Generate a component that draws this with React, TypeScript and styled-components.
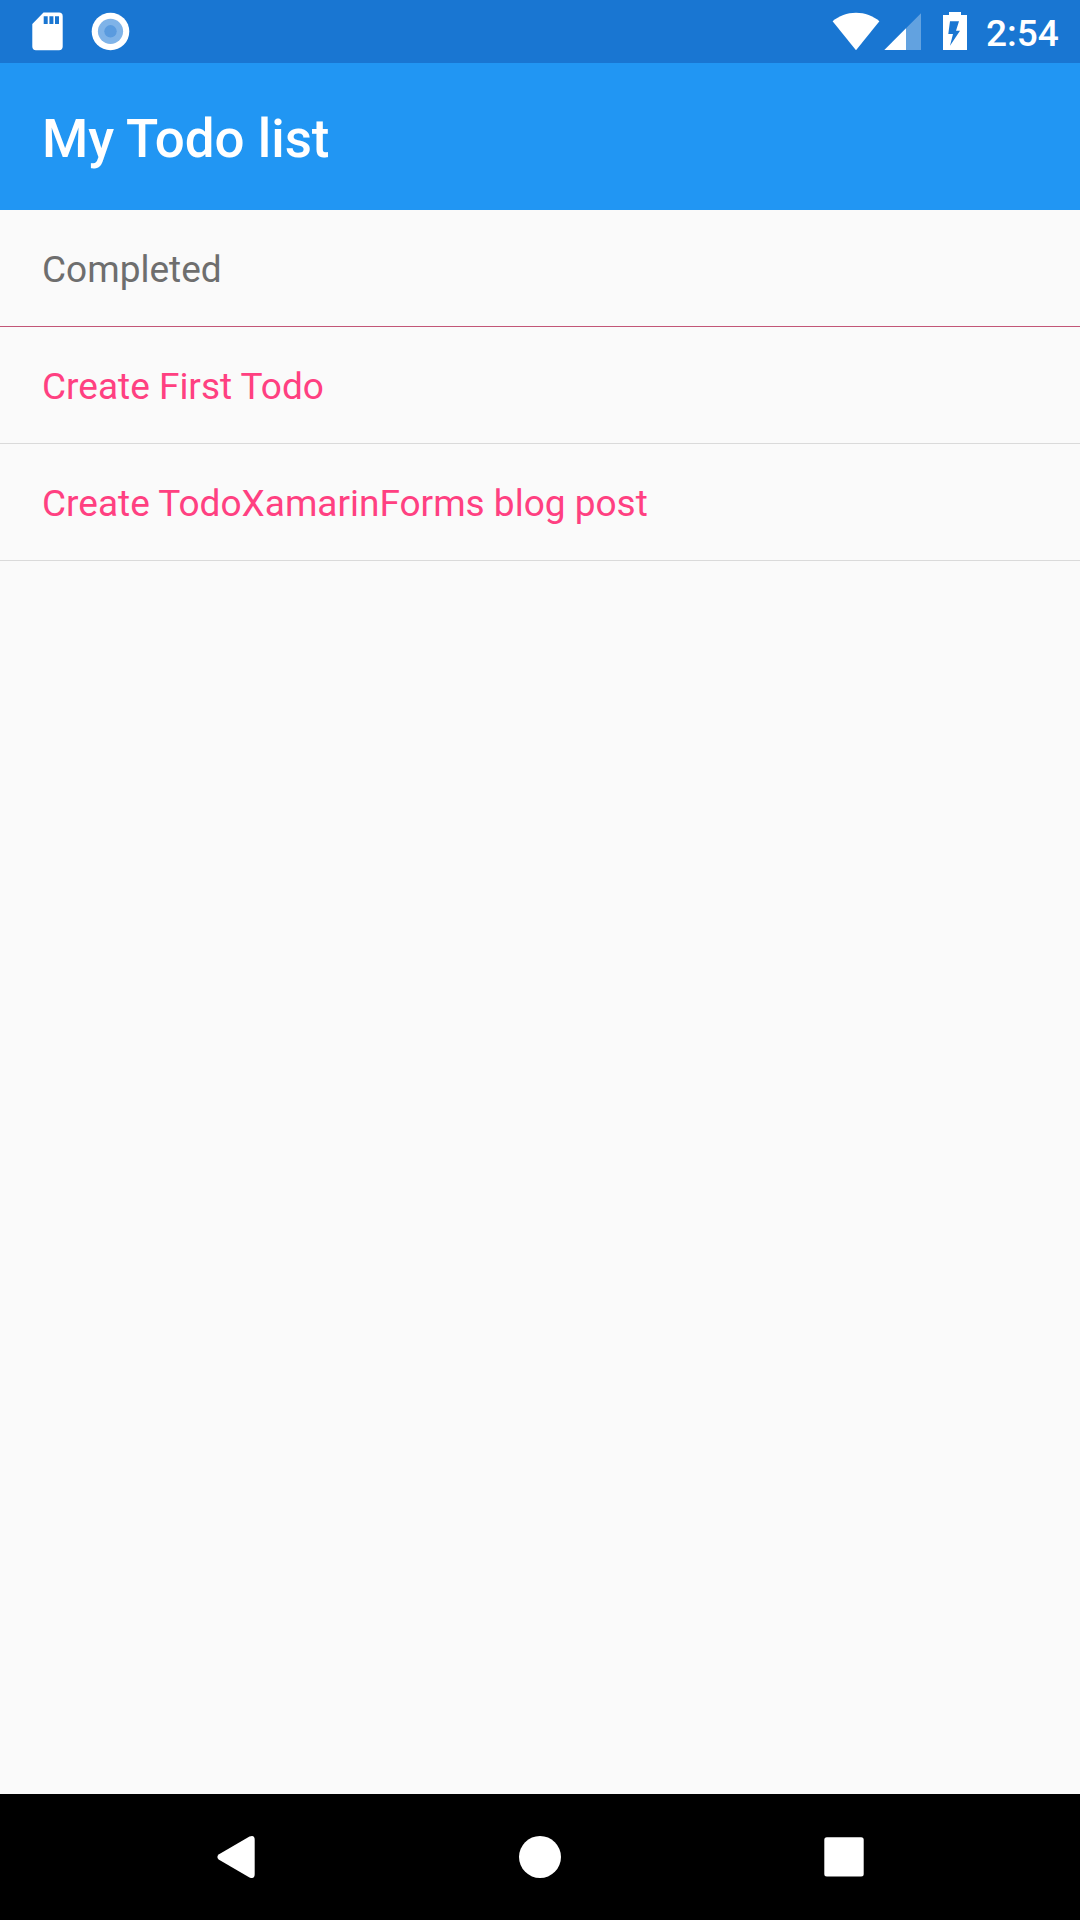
import React from "react";
import styled, { createGlobalStyle } from "styled-components";

const GlobalStyle = createGlobalStyle`
  *, *::before, *::after { box-sizing: border-box; }
  body { margin: 0; background: #fafafa; font-family: Roboto, "Noto Sans", sans-serif; }
`;

const Screen = styled.div`
  display: flex;
  flex-direction: column;
  width: 1080px;
  height: 1920px;
  background: #fafafa;
  overflow: hidden;
`;

const StatusBar = styled.header`
  display: flex;
  justify-content: space-between;
  height: 63px;
  padding: 0 21px 0 32px;
  background: #1976d2;
  color: #fff;
`;

const StatusGroup = styled.div`
  display: flex;
  align-items: flex-start;
`;

const Glyph = styled.svg<{ $gap?: number }>`
  display: block;
  flex: none;
  margin-right: ${(p) => p.$gap ?? 0}px;
`;

const Clock = styled.time`
  width: 73px;
  font-size: 37px;
  font-weight: 500;
  line-height: 43px;
  padding-top: 12px;
  white-space: nowrap;
`;

const AppBar = styled.div`
  display: flex;
  align-items: center;
  height: 147px;
  padding: 5px 42px 0;
  background: #2196f3;
`;

const Title = styled.h1`
  margin: 0;
  color: #fff;
  font-size: 52.9px;
  font-weight: 500;
  line-height: 62px;
`;

const List = styled.ul`
  flex: 1;
  margin: 0;
  padding: 0;
  list-style: none;
`;

const Row = styled.li<{ $header?: boolean }>`
  display: flex;
  align-items: center;
  height: 117px;
  padding: 2px 42px 0;
  border-bottom: 1px solid ${(p) => (p.$header ? "#c25577" : "#dadada")};
  color: ${(p) => (p.$header ? "#6e6e6e" : "#ff4081")};
  font-size: 37px;
  line-height: 43px;
`;

const NavBar = styled.nav`
  display: flex;
  align-items: center;
  justify-content: center;
  gap: 178px;
  height: 126px;
  background: #000;
`;

const NavButton = styled.button`
  display: flex;
  width: 126px;
  height: 126px;
  align-items: center;
  justify-content: center;
  padding: 0;
  border: 0;
  background: transparent;
`;

const todos = ["Create First Todo", "Create TodoXamarinForms blog post"];

export default function App() {
  return (
    <>
      <GlobalStyle />
      <Screen>
        <StatusBar>
          <StatusGroup>
            <Glyph width="31" height="63" viewBox="32 0 31 63" $gap={28}>
              <path
                fill="#fff"
                fillRule="evenodd"
                d="M43.5 12.5H59a3.7 3.7 0 0 1 3.7 3.7V46.5a3.7 3.7 0 0 1-3.7 3.7H36a3.7 3.7 0 0 1-3.7-3.7V24zM43.7 16.3v7.7h4v-7.7zM49.4 16.3v7.7h4v-7.7zM55 16.3v7.7h4v-7.7z"
              />
            </Glyph>
            <Glyph width="40" height="63" viewBox="91 0 40 63">
              <circle cx="110.5" cy="31.5" r="18.8" fill="#fff" />
              <circle cx="110.5" cy="31.3" r="12.6" fill="#7fb3e8" />
              <circle cx="110.5" cy="31.3" r="6.2" fill="#5a9bdf" />
            </Glyph>
          </StatusGroup>
          <StatusGroup>
            <Glyph width="48" height="63" viewBox="832 0 48 63" $gap={4}>
              <path fill="#fff" d="M856 50.2 832.6 21.3C839 16 847 12.8 856 12.8s17 3.2 23.4 8.5z" />
            </Glyph>
            <Glyph width="38" height="63" viewBox="884 0 38 63" $gap={20}>
              <path fill="#fff" fillOpacity="0.32" d="M921 13.2V50H906V28.3z" />
              <path fill="#fff" d="M906 28.3V50H884.3z" />
            </Glyph>
            <Glyph width="26" height="63" viewBox="942 0 26 63" $gap={18}>
              <path
                fill="#fff"
                fillRule="evenodd"
                d="M949 12h12v3h6v35h-24V15h6zM950 21.3 948.3 34H953l-3 11.7L960 30.7h-4L959 21.3z"
              />
            </Glyph>
            <Clock>2:54</Clock>
          </StatusGroup>
        </StatusBar>
        <AppBar>
          <Title>My Todo list</Title>
        </AppBar>
        <List>
          <Row $header>Completed</Row>
          {todos.map((todo) => (
            <Row key={todo}>{todo}</Row>
          ))}
        </List>
        <NavBar>
          <NavButton aria-label="Back">
            <Glyph width="126" height="126" viewBox="173 1794 126 126">
              <path
                fill="#fff"
                d="M218.6 1854.6 249.5 1836.6Q254.7 1834.4 254.7 1840V1874Q254.7 1879.6 249.5 1877.4L218.6 1859.6Q216.2 1857 218.6 1854.6z"
              />
            </Glyph>
          </NavButton>
          <NavButton aria-label="Home">
            <Glyph width="126" height="126" viewBox="477 1794 126 126">
              <circle cx="540" cy="1857" r="21" fill="#fff" />
            </Glyph>
          </NavButton>
          <NavButton aria-label="Overview">
            <Glyph width="126" height="126" viewBox="781 1794 126 126">
              <rect x="824.3" y="1837.2" width="39.4" height="39.4" rx="2.5" fill="#fff" />
            </Glyph>
          </NavButton>
        </NavBar>
      </Screen>
    </>
  );
}
